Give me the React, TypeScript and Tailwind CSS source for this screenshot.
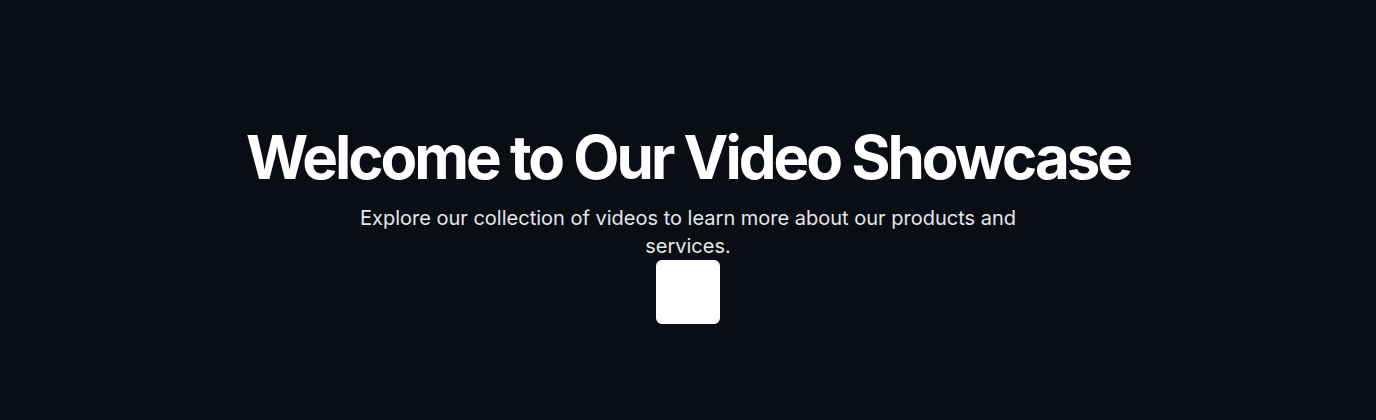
import React from 'react';

const App: React.FC = () => {
    return (
        <section
            className="min-h-screen h-[420px] w-full bg-[#0a0d14] flex flex-col items-center justify-center pt-[31px] text-center"
            style={{ fontFamily: 'Inter, "Noto Sans", sans-serif' }}
        >
            <h1 className="text-6xl leading-none font-bold tracking-tighter text-white">
                Welcome to Our Video Showcase
            </h1>
            <p className="mt-[17px] max-w-2xl text-xl leading-7 text-gray-200">
                Explore our collection of videos to learn more about our products and services.
            </p>
            <div className="w-16 h-16 bg-white rounded-md"></div>
        </section>
    );
};

export default App;
